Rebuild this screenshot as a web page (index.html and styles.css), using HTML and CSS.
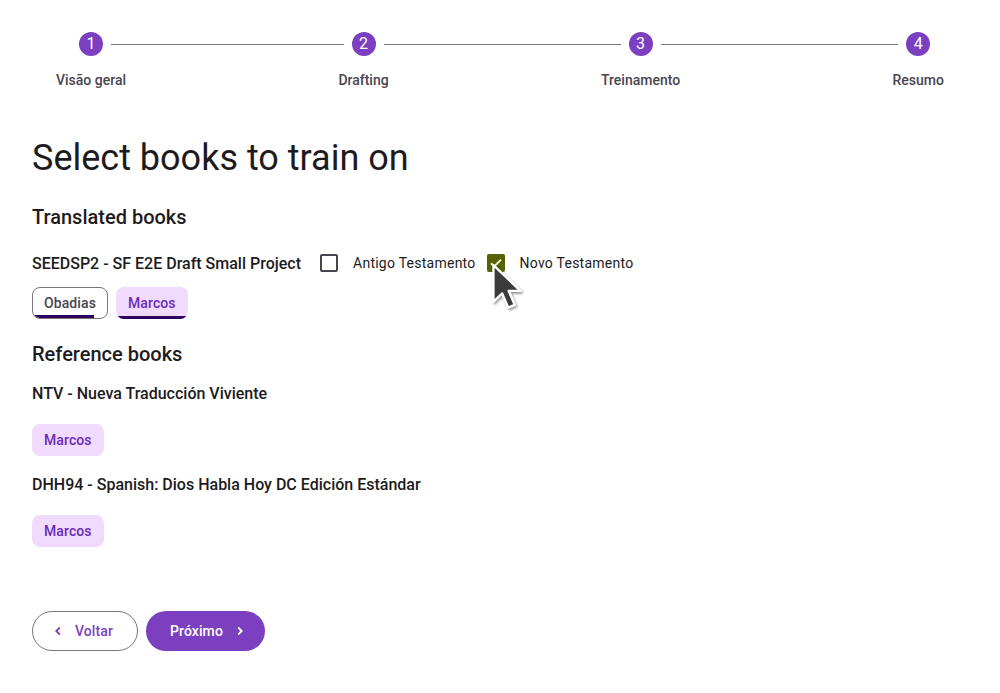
FILE: index.html
```html
<!DOCTYPE html>
<html lang="pt">
<head>
<meta charset="utf-8">
<title>Select books to train on</title>
<link rel="stylesheet" href="styles.css">
</head>
<body>
<div class="page">
  <div class="stepper">
    <div class="step first">
      <div class="step-top"><span class="seg"></span><span class="num">1</span><span class="seg"></span></div>
      <div class="step-label">Visão geral</div>
    </div>
    <div class="link"></div>
    <div class="step">
      <div class="step-top"><span class="seg"></span><span class="num">2</span><span class="seg"></span></div>
      <div class="step-label">Drafting</div>
    </div>
    <div class="link"></div>
    <div class="step">
      <div class="step-top"><span class="seg"></span><span class="num">3</span><span class="seg"></span></div>
      <div class="step-label">Treinamento</div>
    </div>
    <div class="link"></div>
    <div class="step last">
      <div class="step-top"><span class="seg"></span><span class="num">4</span><span class="seg"></span></div>
      <div class="step-label">Resumo</div>
    </div>
  </div>

  <h1 class="title">Select books to train on</h1>

  <h2 class="section">Translated books</h2>
  <div class="project-row">
    <span class="project-name">SEEDSP2 - SF E2E Draft Small Project</span>
    <label class="cb">
      <span class="cb-touch"><span class="cb-box"></span></span>
      <span class="cb-label">Antigo Testamento</span>
    </label>
    <label class="cb">
      <span class="cb-touch"><span class="cb-box checked"><svg viewBox="0 0 18 18" width="18" height="18"><path d="M4 9.2 L7.3 12.4 L14 5.6" fill="none" stroke="#eef0d8" stroke-width="2"/></svg></span></span>
      <span class="cb-label">Novo Testamento</span>
    </label>
    <svg class="cursor" width="38" height="54" viewBox="-2 -2 18 26">
      <defs><filter id="sh" x="-30%" y="-30%" width="160%" height="160%"><feDropShadow dx="0.6" dy="0.8" stdDeviation="0.6" flood-color="#000" flood-opacity="0.45"/></filter></defs>
      <path d="M0 0 L0 17.5 L4.2 13.6 L7.1 20.4 L10.2 19.1 L7.3 12.4 L13 12.4 Z" fill="#3a3a3a" stroke="#fff" stroke-width="1.1" stroke-linejoin="round" filter="url(#sh)"/>
    </svg>
  </div>
  <div class="chips">
    <span class="chip outlined">Obadias<span class="bar" style="width:82%"></span></span>
    <span class="chip selected">Marcos<span class="bar" style="width:100%"></span></span>
  </div>

  <h2 class="section ref">Reference books</h2>
  <div class="ref-name">NTV - Nueva Traducción Viviente</div>
  <div class="chips ref-chips"><span class="chip selected">Marcos</span></div>
  <div class="ref-name next">DHH94 - Spanish: Dios Habla Hoy DC Edición Estándar</div>
  <div class="chips ref-chips"><span class="chip selected">Marcos</span></div>

  <div class="actions">
    <button class="btn outline"><svg class="ico" viewBox="0 0 18 18" width="18" height="18"><path d="M10.8 5.5 L7.3 9 L10.8 12.5" fill="none" stroke="currentColor" stroke-width="1.8"/></svg>Voltar</button>
    <button class="btn filled">Próximo<svg class="ico" viewBox="0 0 18 18" width="18" height="18"><path d="M7.2 5.5 L10.7 9 L7.2 12.5" fill="none" stroke="currentColor" stroke-width="1.8"/></svg></button>
  </div>
</div>
</body>
</html>
```

FILE: styles.css
```css
* { box-sizing: border-box; }
html, body { margin: 0; padding: 0; background: #fff; }
body {
  font-family: Roboto, "Noto Sans", "Liberation Sans", sans-serif;
  color: #1d1b20;
}
.page { padding: 0 32px; }

/* stepper */
.stepper {
  display: flex;
  align-items: flex-start;
  padding-top: 32px;
}
.step {
  display: flex;
  flex-direction: column;
  align-items: stretch;
  padding: 0 24px;
  flex: none;
}
.step-top {
  display: flex;
  align-items: center;
  gap: 8px;
  margin: 0 -24px;
  height: 24px;
}
.seg {
  flex: 1;
  height: 1px;
  background: #79747e;
}
.first .step-top .seg:first-child,
.last .step-top .seg:last-child { visibility: hidden; }
.num {
  width: 24px;
  height: 24px;
  border-radius: 50%;
  background: #7b3fbf;
  color: #fff;
  font-size: 16px;
  line-height: 24px;
  text-align: center;
  flex: none;
}
.link {
  flex: 1;
  height: 1px;
  background: #79747e;
  margin-top: 11.5px;
}
.step-label {
  margin-top: 14px;
  font-size: 14px;
  font-weight: 500;
  line-height: 20px;
  color: #49454f;
  text-align: center;
  white-space: nowrap;
}

/* headings */
.title {
  margin: 46px 0 0;
  font-size: 36px;
  line-height: 44px;
  font-weight: 400;
  color: #1d1b20;
}
.section {
  margin: 23px 0 0;
  font-size: 20px;
  line-height: 28px;
  font-weight: 500;
  color: #1d1b20;
}
.section.ref { margin-top: 21px; }

/* project row */
.project-row {
  position: relative;
  display: flex;
  align-items: center;
  height: 40px;
  margin-top: 12px;
}
.project-name {
  font-size: 16px;
  font-weight: 500;
  margin-right: 8px;
  white-space: nowrap;
}
.cb {
  display: flex;
  align-items: center;
  cursor: pointer;
}
.cb-touch {
  width: 40px;
  height: 40px;
  display: flex;
  align-items: center;
  justify-content: center;
}
.cb-box {
  width: 18px;
  height: 18px;
  border: 2px solid #49454f;
  border-radius: 2px;
  display: block;
}
.cb-box.checked {
  border: none;
  background: #566100;
}
.cb-box svg { display: block; }
.cb-label {
  padding-left: 4px;
  font-size: 14px;
  letter-spacing: 0.25px;
  line-height: 20px;
  color: #1d1b20;
  white-space: nowrap;
}
.cursor {
  position: absolute;
  left: 457px;
  top: 18px;
}

/* chips */
.chips {
  display: flex;
  gap: 8px;
  margin-top: 4px;
}
.chip {
  position: relative;
  display: inline-flex;
  align-items: center;
  height: 32px;
  padding: 0 12px;
  border-radius: 8px;
  font-size: 14px;
  font-weight: 500;
  letter-spacing: 0.1px;
  overflow: hidden;
}
.chip.outlined {
  border: 1px solid #79747e;
  color: #49454f;
  background: #fff;
  padding: 0 11px;
}
.chip.selected {
  background: #f0dbff;
  color: #6a2db3;
}
.chip .bar {
  position: absolute;
  left: 0;
  bottom: 0;
  height: 3px;
  background: #2c0061;
}

.ref-name {
  margin-top: 14px;
  font-size: 16px;
  font-weight: 500;
  line-height: 24px;
}
.ref-name.next { margin-top: 17px; }
.ref-chips { margin-top: 18px; }

/* actions */
.actions {
  display: flex;
  gap: 8px;
  margin-top: 64px;
}
.btn {
  display: inline-flex;
  align-items: center;
  gap: 8px;
  height: 40px;
  border-radius: 20px;
  font-family: inherit;
  font-size: 14px;
  font-weight: 500;
  letter-spacing: 0.1px;
  cursor: pointer;
}
.btn .ico { display: block; }
.btn.outline {
  background: #fff;
  border: 1px solid #79747e;
  color: #7b3fbf;
  padding: 0 24px 0 16px;
}
.btn.filled {
  background: #7b3fbf;
  border: none;
  color: #fff;
  padding: 0 16px 0 24px;
}
```
